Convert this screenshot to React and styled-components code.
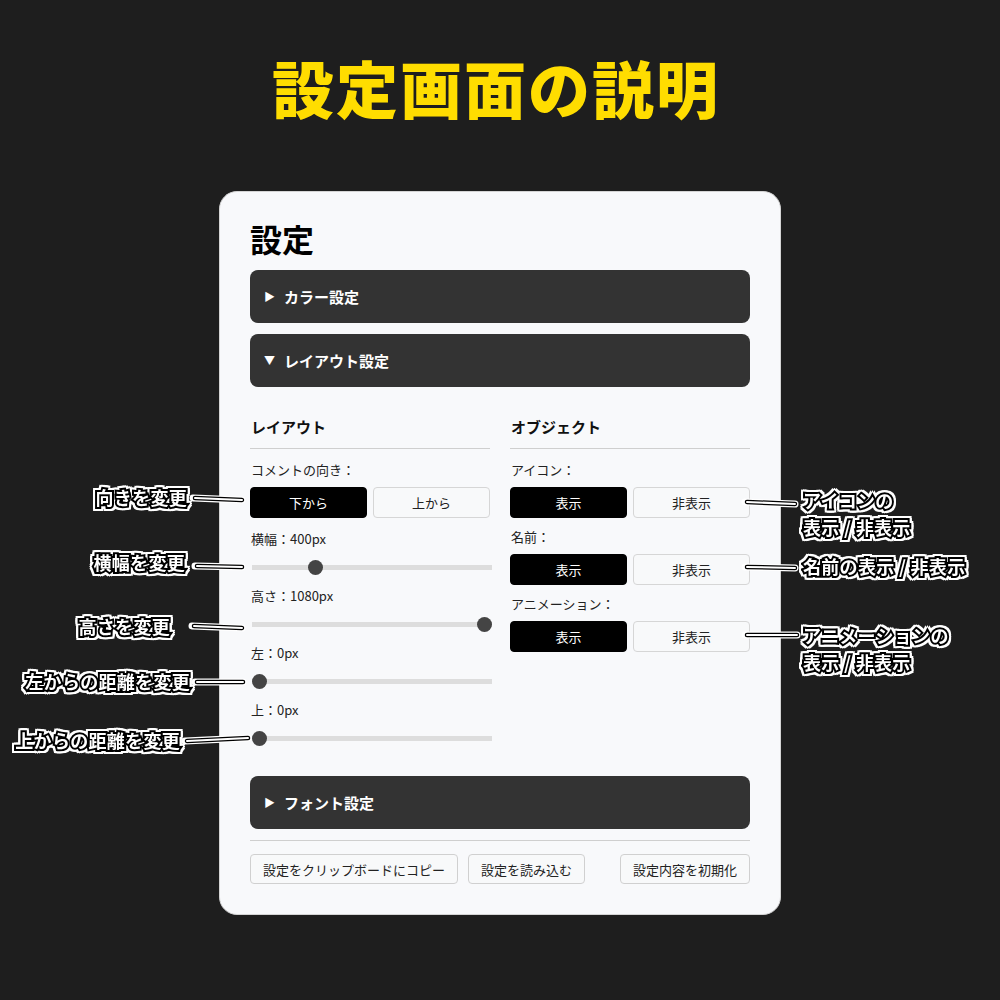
import React from "react";
import styled, { createGlobalStyle } from "styled-components";

const Global = createGlobalStyle`
  html, body { margin: 0; padding: 0; background: #1e1e1e; }
  * { box-sizing: border-box; }
  body { font-family: "Noto Sans CJK JP", "Noto Sans", sans-serif; }
`;

const Page = styled.div`
  position: relative;
  width: 1000px;
  height: 1000px;
  background: #1e1e1e;
  display: flex;
  flex-direction: column;
  align-items: center;
  padding-top: 56px;
`;

const Title = styled.h1`
  margin: 0 8px 0 0;
  font-size: 62px;
  line-height: 1;
  font-weight: 900;
  color: #ffdd00;
  letter-spacing: 2px;
`;

const Card = styled.div`
  margin-top: 73px;
  width: 562px;
  background: #f8f9fb;
  border: 1px solid #d4d4d4;
  border-radius: 18px;
  padding: 30px;
  display: flex;
  flex-direction: column;
`;

const CardTitle = styled.h2`
  margin: 0 0 16px;
  font-size: 32px;
  line-height: 1;
  font-weight: 700;
  color: #000;
`;

const AccordionHeader = styled.div`
  height: 53px;
  background: #333333;
  border-radius: 8px;
  display: flex;
  align-items: center;
  padding: 0 14px;
  gap: 10px;
  color: #fff;
  font-size: 15px;
  font-weight: 700;
  margin-bottom: ${(p) => p.$mb || 0}px;
`;

const Caret = styled.span`
  font-size: 11px;
  line-height: 1;
  width: 10px;
  display: inline-block;
`;

const Body = styled.div`
  display: grid;
  grid-template-columns: 240px 240px;
  column-gap: 20px;
  padding-top: 29px;
  padding-bottom: 27px;
`;

const Column = styled.div`
  display: flex;
  flex-direction: column;
`;

const ColHeading = styled.div`
  font-size: 15px;
  font-weight: 700;
  line-height: 22px;
  color: #111;
  padding-bottom: 10px;
  border-bottom: 1px solid #cfcfcf;
  margin-bottom: 11px;
  padding-left: 1px;
`;

const Group = styled.div`
  display: flex;
  flex-direction: column;
  gap: 7px;
  margin-bottom: ${(p) => p.$mb}px;
`;

const Label = styled.div`
  font-size: 13px;
  line-height: 20px;
  color: #222;
  padding-left: 1px;
`;

const Toggle = styled.div`
  display: grid;
  grid-template-columns: 1fr 1fr;
  gap: 6px;
`;

const ToggleButton = styled.button`
  height: 31px;
  border-radius: 4px;
  font-family: inherit;
  font-size: 13px;
  padding: 0;
  cursor: pointer;
  background: ${(p) => (p.$active ? "#000" : "#f8f9fa")};
  color: ${(p) => (p.$active ? "#fff" : "#222")};
  border: 1px solid ${(p) => (p.$active ? "#000" : "#d6d6d6")};
`;

const Range = styled.input`
  -webkit-appearance: none;
  appearance: none;
  width: 240px;
  height: 22px;
  margin: 0 0 0 2px;
  background: transparent;
  &::-webkit-slider-runnable-track {
    height: 5px;
    background: #dddddd;
  }
  &::-webkit-slider-thumb {
    -webkit-appearance: none;
    width: 15px;
    height: 15px;
    border-radius: 50%;
    background: #444;
    margin-top: -5px;
    border: none;
  }
`;

const Divider = styled.div`
  height: 1px;
  background: #cfcfcf;
  margin: 11px 0 13px;
`;

const Footer = styled.div`
  display: flex;
  gap: 10px;
`;

const FooterButton = styled.button`
  height: 30px;
  padding: 0 12px;
  border: 1px solid #d0d0d0;
  border-radius: 4px;
  background: #f8f9fa;
  font-family: inherit;
  font-size: 13px;
  color: #222;
  margin-left: ${(p) => (p.$push ? "auto" : "0")};
`;

const Note = styled.div`
  position: absolute;
  top: ${(p) => p.$y}px;
  ${(p) => (p.$right != null ? `right: ${1000 - p.$right}px; text-align: right;` : `left: ${p.$left}px;`)}
  font-size: 18px;
  font-weight: 700;
  line-height: 27px;
  letter-spacing: 0.3px;
  color: #fff;
  white-space: pre;
  -webkit-text-stroke: 4px #000;
  paint-order: stroke fill;
  filter: drop-shadow(2px 0 0 #fff) drop-shadow(-2px 0 0 #fff) drop-shadow(0 2px 0 #fff) drop-shadow(0 -2px 0 #fff);
`;

const Connectors = styled.svg`
  position: absolute;
  left: 0;
  top: 0;
  width: 1000px;
  height: 1000px;
  pointer-events: none;
`;

const sliders = [
  { label: "横幅：400px", value: 400, max: 1600 },
  { label: "高さ：1080px", value: 1080, max: 1080 },
  { label: "左：0px", value: 0, max: 1920 },
  { label: "上：0px", value: 0, max: 1080 },
];

const toggles = ["アイコン：", "名前：", "アニメーション："];

const leftNotes = [
  { text: "向きを変更", right: 187, y: 497 },
  { text: "横幅を変更", right: 185, y: 562 },
  { text: "高さを変更", right: 170, y: 626 },
  { text: "左からの距離を変更", right: 190, y: 681 },
  { text: "上からの距離を変更", right: 180, y: 740 },
];

const rightNotes = [
  { lines: ["アイコンの", "表示 / 非表示"], left: 803, y: 500 },
  { lines: ["名前の表示 / 非表示"], left: 803, y: 566 },
  { lines: ["アニメーションの", "表示 / 非表示"], left: 803, y: 635 },
];

const lines = [
  [193, 498, 242, 500],
  [195, 566, 242, 567],
  [192, 626, 242, 628],
  [195, 682, 243, 682],
  [185, 741, 248, 738],
  [745, 502, 795, 504],
  [745, 567, 795, 568],
  [745, 635, 797, 635],
];

export default function App() {
  return (
    <>
      <Global />
      <Page>
        <Title>設定画面の説明</Title>
        <Card>
          <CardTitle>設定</CardTitle>
          <AccordionHeader $mb={11}>
            <Caret>▶</Caret>カラー設定
          </AccordionHeader>
          <AccordionHeader>
            <Caret>▼</Caret>レイアウト設定
          </AccordionHeader>
          <Body>
            <Column>
              <ColHeading>レイアウト</ColHeading>
              <Group $mb={11}>
                <Label>コメントの向き：</Label>
                <Toggle>
                  <ToggleButton $active>下から</ToggleButton>
                  <ToggleButton>上から</ToggleButton>
                </Toggle>
              </Group>
              {sliders.map((s, i) => (
                <Group key={s.label} $mb={i === sliders.length - 1 ? 0 : 8}>
                  <Label>{s.label}</Label>
                  <Range type="range" min={0} max={s.max} defaultValue={s.value} />
                </Group>
              ))}
            </Column>
            <Column>
              <ColHeading>オブジェクト</ColHeading>
              {toggles.map((t) => (
                <Group key={t} $mb={9}>
                  <Label>{t}</Label>
                  <Toggle>
                    <ToggleButton $active>表示</ToggleButton>
                    <ToggleButton>非表示</ToggleButton>
                  </Toggle>
                </Group>
              ))}
            </Column>
          </Body>
          <AccordionHeader>
            <Caret>▶</Caret>フォント設定
          </AccordionHeader>
          <Divider />
          <Footer>
            <FooterButton>設定をクリップボードにコピー</FooterButton>
            <FooterButton>設定を読み込む</FooterButton>
            <FooterButton $push>設定内容を初期化</FooterButton>
          </Footer>
        </Card>

        <Connectors viewBox="0 0 1000 1000">
          {lines.map(([x1, y1, x2, y2], i) => (
            <g key={i}>
              <line x1={x1} y1={y1} x2={x2} y2={y2} stroke="#fff" strokeWidth="7" strokeLinecap="round" />
              <line x1={x1 + 2} y1={y1} x2={x2} y2={y2} stroke="#000" strokeWidth="4.5" strokeLinecap="round" />
              <line x1={x1 + 2} y1={y1} x2={x2} y2={y2} stroke="#fff" strokeWidth="2" strokeLinecap="round" />
            </g>
          ))}
        </Connectors>

        {leftNotes.map((n) => (
          <Note key={n.text} $right={n.right} $y={n.y - 13.5}>
            {n.text}
          </Note>
        ))}
        {rightNotes.map((n) => (
          <Note key={n.lines[0]} $left={n.left} $y={n.y - 13.5}>
            {n.lines.join("\n")}
          </Note>
        ))}
      </Page>
    </>
  );
}
